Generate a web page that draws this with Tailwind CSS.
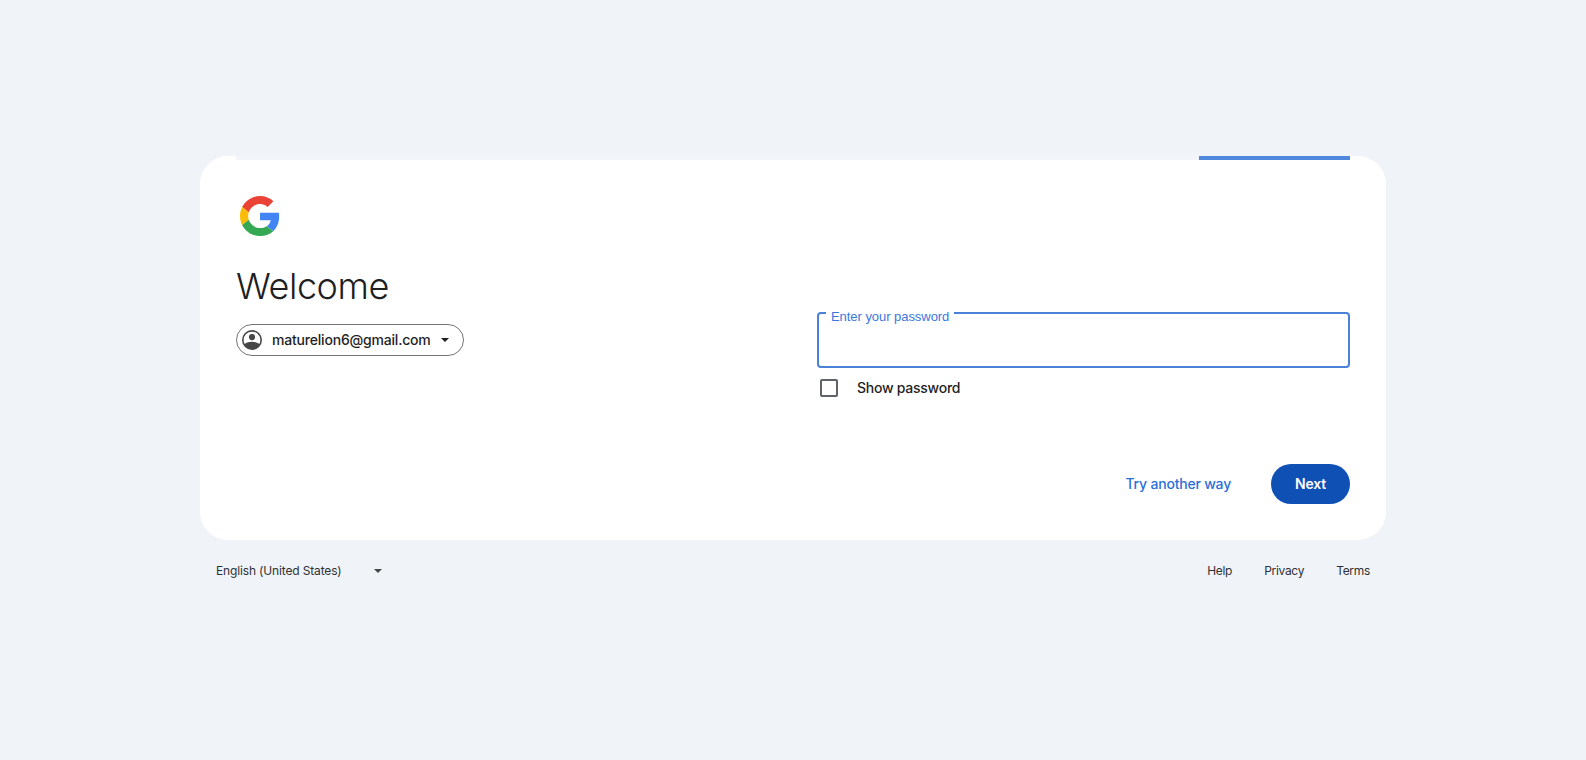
<!DOCTYPE html>
<html lang="en">
<head>
    <meta charset="UTF-8">
    <meta name="viewport" content="width=device-width, initial-scale=1.0">
    <title>Sign in</title>
    <script src="https://cdn.jsdelivr.net/npm/@tailwindcss/browser@4"></script>
</head>
<body class="bg-[#f0f4f9] min-h-screen overflow-hidden pt-[156px] font-['Inter','Noto_Sans',sans-serif] text-[#1f1f1f]">
    <main class="relative w-[1186px] h-[384px] mx-auto bg-white rounded-[28px] px-9 pt-10 overflow-hidden">
        <div class="absolute left-9 right-9 top-0 h-1 bg-[#f3f5fa]">
            <div class="absolute right-0 top-0 h-1 w-[151px] bg-[#5088de]"></div>
        </div>

        <div class="grid grid-cols-2 gap-x-12">
            <div>
                <svg class="ml-1 w-10 h-10" viewBox="0 0 48 48">
                    <path fill="#EA4335" d="M24 9.5c3.54 0 6.71 1.22 9.21 3.6l6.85-6.85C35.9 2.38 30.47 0 24 0 14.62 0 6.51 5.38 2.56 13.22l7.98 6.19C12.43 13.72 17.74 9.5 24 9.5z"/>
                    <path fill="#4285F4" d="M46.98 24.55c0-1.57-.15-3.09-.38-4.55H24v9.02h12.94c-.58 2.96-2.26 5.48-4.78 7.18l7.73 6c4.51-4.18 7.09-10.36 7.09-17.65z"/>
                    <path fill="#FBBC05" d="M10.53 28.59c-.48-1.45-.76-2.99-.76-4.59s.27-3.14.76-4.59l-7.98-6.19C.92 16.46 0 20.12 0 24c0 3.88.92 7.54 2.56 10.78l7.97-6.19z"/>
                    <path fill="#34A853" d="M24 48c6.48 0 11.93-2.13 15.89-5.81l-7.73-6c-2.15 1.45-4.92 2.3-8.16 2.3-6.26 0-11.57-4.22-13.47-9.91l-7.98 6.19C6.51 42.62 14.62 48 24 48z"/>
                </svg>
                <h1 class="mt-[28px] text-[36px] leading-[44px] font-[350] tracking-[-0.45px]">Welcome</h1>
                <div class="mt-[16px] flex items-center w-[228px] h-8 border border-[#747775] rounded-full pl-[5px]">
                    <svg class="w-5 h-5 shrink-0" viewBox="1 1 22 22" fill="#444746">
                        <path d="M12 1a11 11 0 1 0 0 22 11 11 0 0 0 0-22zm0 1.800a9.200 9.200 0 0 1 9.200 9.200c0 1.600-.4 3.100-1.100 4.400C18 14.800 15 14 12 14s-6 .8-8.100 2.400A9.200 9.200 0 0 1 2.800 12 9.200 9.200 0 0 1 12 2.800z"/>
                        <circle cx="12" cy="8.800" r="3.400"/>
                    </svg>
                    <span class="ml-[10px] -mt-[1px] text-[14px] font-[450] leading-5 tracking-[-0.2px]">maturelion6@gmail.com</span>
                    <svg class="ml-[10px] w-2 h-1" viewBox="0 0 8 4" fill="#1f1f1f"><path d="M0 0h8L4 4z"/></svg>
                </div>
            </div>

            <div class="pt-[116px]">
                <div class="relative h-14 border-2 border-[#4a80d8] rounded-[4px]">
                    <span class="absolute left-[7px] top-[-4px] bg-white px-[5px] font-['Liberation_Sans',sans-serif] text-[13px] leading-[14px] tracking-[-0.05px] text-[#3b78dc]">Enter your password</span>
                </div>
                <label class="mt-[11px] flex items-center h-[18px] pl-[3px]">
                    <span class="w-[18px] h-[18px] border-2 border-[#5f6368] rounded-[2px]"></span>
                    <span class="ml-[19px] text-[14px] font-[450] leading-5 tracking-[-0.25px]">Show password</span>
                </label>
            </div>
        </div>

        <div class="absolute right-9 bottom-9 flex items-center">
            <a class="pb-[2px] text-[14px] font-medium tracking-[-0.2px] text-[#2b6fd8]">Try another way</a>
            <button class="ml-10 w-[79px] h-10 pb-[2px] rounded-full bg-[#0f50b5] text-white text-[14px] font-semibold tracking-[-0.2px]">Next</button>
        </div>
    </main>

    <footer class="w-[1186px] mx-auto mt-[23px] flex items-center justify-between px-4 text-[12px] leading-4 tracking-[-0.15px] text-[#2f3033]">
        <div class="flex items-center">
            <span class="w-[158px]">English (United States)</span>
            <svg class="w-2 h-1" viewBox="0 0 8 4" fill="#444746"><path d="M0 0h8L4 4z"/></svg>
        </div>
        <nav class="flex gap-8 tracking-[-0.3px]">
            <a>Help</a>
            <a>Privacy</a>
            <a>Terms</a>
        </nav>
    </footer>
</body>
</html>
